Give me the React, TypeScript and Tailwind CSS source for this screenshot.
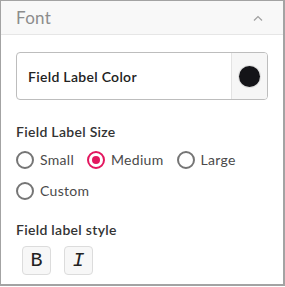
import { useState } from "react";

const SIZES = ["Small", "Medium", "Large", "Custom"];

const Radio = ({ label, checked, onSelect }: { label: string; checked: boolean; onSelect: () => void }) => (
  <button type="button" onClick={onSelect} className="flex h-[20px] items-center gap-[6px] text-left">
    <span
      className={`flex h-[18px] w-[18px] items-center justify-center rounded-full border-2 ${
        checked ? "border-[#e3175f]" : "border-[#757575]"
      }`}
    >
      {checked && <span className="h-[8px] w-[8px] rounded-full bg-[#e3175f]" />}
    </span>
    <span className="text-[14px] leading-[20px] tracking-[0.3px] text-[#4a4a4a]">{label}</span>
  </button>
);

export default function App() {
  const [size, setSize] = useState("Medium");

  return (
    <div className="h-[287px] w-[285px] bg-white font-['Lato','Inter',sans-serif]">
      <div className="flex h-[286px] flex-col border border-r-2 border-b-2 border-[#a3a3a3]">
        <div className="flex h-[34px] items-center justify-between border-b border-[#e6e6e6] bg-[#f8f8f8] pl-[15px] pr-[20px]">
          <span className="text-[17px] tracking-[0.3px] text-[#8c8c8c]">Font</span>
          <svg width="10" height="6" viewBox="0 0 10 6" fill="none" stroke="#a0a0a0" strokeWidth="1.2">
            <path d="M1 5.5 L5 1.5 L9 5.5" />
          </svg>
        </div>

        <div className="flex flex-col px-[15px] pt-[17px]">
          <div className="flex h-[48px] overflow-hidden rounded-[4px] border border-[#bdbdbd]">
            <div className="flex flex-1 items-center pl-[11px] text-[14px] font-semibold tracking-[0.3px] text-[#222]">
              Field Label Color
            </div>
            <div className="flex w-[36px] items-center justify-center border-l border-[#e3e3e3] bg-[#f6f6f6]">
              <span className="h-[21px] w-[21px] rounded-full bg-[#141418] shadow-[0_0_0_1px_#e0e0e0]" />
            </div>
          </div>

          <div className="mt-[22px] text-[14px] leading-[20px] font-semibold tracking-[0.3px] text-[#333]">
            Field Label Size
          </div>
          <div className="mt-[8px] flex flex-wrap gap-x-[13px] gap-y-[11px]">
            {SIZES.map((s) => (
              <Radio key={s} label={s} checked={size === s} onSelect={() => setSize(s)} />
            ))}
          </div>

          <div className="mt-[19px] text-[14px] leading-[20px] font-semibold tracking-[0.3px] text-[#333]">
            Field label style
          </div>
          <div className="mt-[6px] flex gap-[13px] pl-[6px]">
            <button
              type="button"
              className="flex h-[29px] w-[29px] items-center justify-center rounded-[4px] border border-[#dcdcdc] bg-[#f7f7f7] font-['Liberation_Mono',monospace] text-[20px] text-[#222]"
            >
              B
            </button>
            <button
              type="button"
              className="flex h-[29px] w-[29px] items-center justify-center rounded-[4px] border border-[#dcdcdc] bg-[#f7f7f7] font-['Liberation_Mono',monospace] text-[20px] italic text-[#222]"
            >
              I
            </button>
          </div>
        </div>
      </div>
    </div>
  );
}
